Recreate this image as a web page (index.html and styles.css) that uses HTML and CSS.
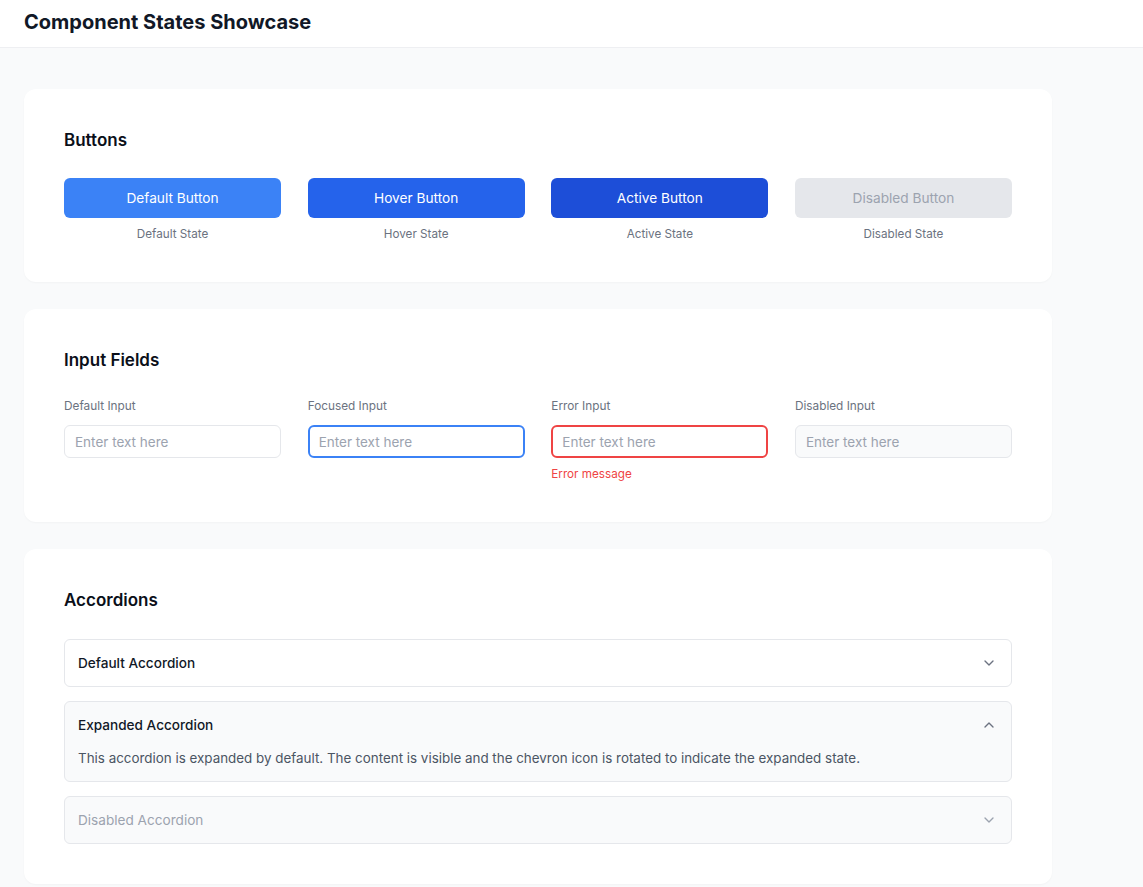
FILE: index.html
```html
<!DOCTYPE html>
<html lang="en">
  <head>
    <meta charset="UTF-8" />
    <meta name="viewport" content="width=device-width, initial-scale=1.0" />
    <title>Component States Showcase</title>
    <link rel="stylesheet" href="styles.css">
  </head>
  <body>
    <header class="topbar">
      <h1>Component States Showcase</h1>
    </header>

    <main class="content">
      <!-- Buttons -->
      <section class="card">
        <h2>Buttons</h2>
        <div class="grid">
          <div class="cell">
            <button class="btn btn-default">Default Button</button>
            <span class="caption">Default State</span>
          </div>
          <div class="cell">
            <button class="btn btn-hover">Hover Button</button>
            <span class="caption">Hover State</span>
          </div>
          <div class="cell">
            <button class="btn btn-active">Active Button</button>
            <span class="caption">Active State</span>
          </div>
          <div class="cell">
            <button class="btn btn-disabled" disabled>Disabled Button</button>
            <span class="caption">Disabled State</span>
          </div>
        </div>
      </section>

      <!-- Inputs -->
      <section class="card">
        <h2>Input Fields</h2>
        <div class="grid">
          <div class="field">
            <label for="in-default">Default Input</label>
            <input id="in-default" type="text" placeholder="Enter text here" />
          </div>
          <div class="field">
            <label for="in-focus">Focused Input</label>
            <input id="in-focus" class="is-focused" type="text" placeholder="Enter text here" />
          </div>
          <div class="field">
            <label for="in-error">Error Input</label>
            <input id="in-error" class="is-error" type="text" placeholder="Enter text here" />
            <span class="error-text">Error message</span>
          </div>
          <div class="field">
            <label for="in-disabled">Disabled Input</label>
            <input id="in-disabled" type="text" placeholder="Enter text here" disabled />
          </div>
        </div>
      </section>

      <!-- Accordions -->
      <section class="card">
        <h2>Accordions</h2>
        <div class="accordions">
          <div class="accordion">
            <div class="accordion-head">
              <span>Default Accordion</span>
              <svg class="chevron" width="16" height="16" viewBox="0 0 24 24" fill="none" stroke="currentColor" stroke-width="2" stroke-linecap="round" stroke-linejoin="round"><path d="M6 9l6 6 6-6"/></svg>
            </div>
          </div>
          <div class="accordion open">
            <div class="accordion-head">
              <span>Expanded Accordion</span>
              <svg class="chevron" width="16" height="16" viewBox="0 0 24 24" fill="none" stroke="currentColor" stroke-width="2" stroke-linecap="round" stroke-linejoin="round"><path d="M6 15l6-6 6 6"/></svg>
            </div>
            <p class="accordion-body">This accordion is expanded by default. The content is visible and the chevron icon is rotated to indicate the expanded state.</p>
          </div>
          <div class="accordion disabled">
            <div class="accordion-head">
              <span>Disabled Accordion</span>
              <svg class="chevron" width="16" height="16" viewBox="0 0 24 24" fill="none" stroke="currentColor" stroke-width="2" stroke-linecap="round" stroke-linejoin="round"><path d="M6 9l6 6 6-6"/></svg>
            </div>
          </div>
        </div>
      </section>
    </main>
  </body>
</html>
```

FILE: styles.css
```css
html::-webkit-scrollbar {
  width: 4px;
  background: #d9d9d9;
}

html::-webkit-scrollbar-thumb {
  background: #d9d9d9;
}

body {
  margin: 0;
  font-family: Inter, "Noto Sans", sans-serif;
  background: #f9fafb;
  color: #111827;
}

.topbar {
  background: #fff;
  border-bottom: 1px solid #eeeff2;
  height: 48px;
  padding: 0 24px 4px;
  box-sizing: border-box;
  display: flex;
  align-items: center;
}

.topbar h1 {
  margin: 0;
  font-size: 20px;
  font-weight: 700;
  color: #111827;
}

.content {
  padding: 41px 24px 24px;
  max-width: 1028px;
  display: flex;
  flex-direction: column;
  gap: 27px;
}

.card {
  background: #fff;
  border-radius: 12px;
  padding: 40px;
  box-shadow: 0 1px 2px rgba(0, 0, 0, 0.03);
}

.card h2 {
  margin: 0 0 27px;
  font-size: 17px;
  line-height: 22px;
  font-weight: 600;
  color: #0b0f19;
}

.grid {
  display: grid;
  grid-template-columns: repeat(4, minmax(0, 1fr));
  column-gap: 26.6px;
}

.cell {
  display: flex;
  flex-direction: column;
  align-items: center;
  gap: 8px;
}

.btn {
  width: 100%;
  height: 40px;
  border: none;
  border-radius: 6px;
  font-family: inherit;
  font-size: 13.7px;
  color: #fff;
  cursor: pointer;
}

.btn-default {
  background: #3b82f6;
}

.btn-hover {
  background: #2563eb;
}

.btn-active {
  background: #1d4ed8;
}

.btn-disabled {
  background: #e5e7eb;
  color: #9ca3af;
  cursor: not-allowed;
}

.caption {
  font-size: 11.7px;
  line-height: 16px;
  color: #6b7280;
}

.field {
  display: flex;
  flex-direction: column;
}

.field label {
  font-size: 11.8px;
  line-height: 16px;
  color: #6b7280;
  margin-bottom: 11px;
}

.field input {
  width: 100%;
  min-width: 0;
  height: 33px;
  box-sizing: border-box;
  border: 1px solid #e5e7eb;
  border-radius: 6px;
  padding: 0 10px;
  font-family: inherit;
  font-size: 13.5px;
  color: #111827;
  background: #fff;
  outline: none;
}

.field input::placeholder {
  color: #9ca3af;
}

.field input.is-focused {
  border: 2px solid #3b82f6;
  padding: 0 9px;
}

.field input.is-error {
  border: 2px solid #ef4444;
  padding: 0 9px;
}

.field input:disabled {
  background: #f9fafb;
}

.error-text {
  margin-top: 8px;
  font-size: 11.7px;
  line-height: 16px;
  color: #ef4444;
}

.accordions {
  display: flex;
  flex-direction: column;
  gap: 14px;
  margin-top: 28px;
}

.accordion {
  border: 1px solid #e5e7eb;
  border-radius: 6px;
  background: #fff;
}

.accordion-head {
  height: 46px;
  display: flex;
  align-items: center;
  justify-content: space-between;
  padding: 0 14px 0 13px;
  font-size: 13.6px;
  font-weight: 500;
  color: #111827;
}

.chevron {
  color: #6b7280;
}

.accordion.open {
  background: #f9fafb;
}

.accordion-body {
  margin: 0 13px 13px;
  font-size: 13.4px;
  line-height: 20px;
  color: #4b5563;
}

.accordion.disabled {
  background: #f9fafb;
}

.accordion.disabled .accordion-head {
  color: #9ca3af;
  font-weight: 400;
}

.accordion.disabled .chevron {
  color: #9ca3af;
}
```
